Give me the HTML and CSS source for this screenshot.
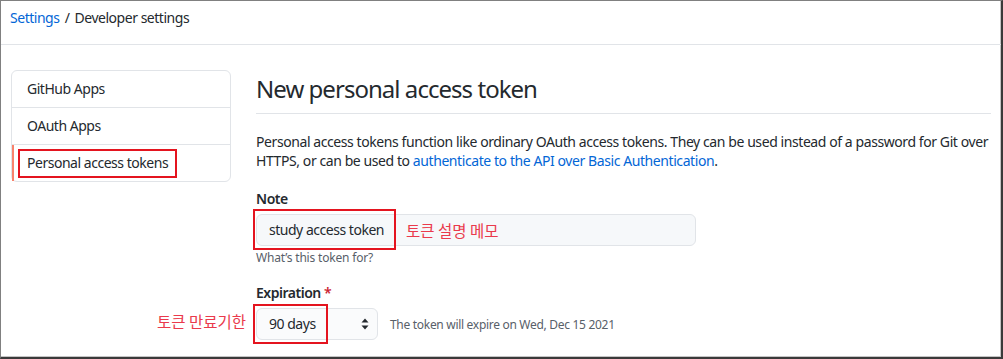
FILE: index.html
```html
<!DOCTYPE html>
<html lang="en">
<head>
  <meta charset="UTF-8">
  <title>New personal access token</title>
  <link rel="stylesheet" href="styles.css">
</head>
<body>
  <div class="frame">
    <div class="crumbs">
      <a href="#">Settings</a> <span class="sep">/</span> Developer settings
    </div>
    <div class="layout">
      <nav class="menu">
        <a class="menu-item" href="#">GitHub Apps</a>
        <a class="menu-item" href="#">OAuth Apps</a>
        <a class="menu-item selected" href="#"><span class="marked">Personal access tokens</span></a>
      </nav>
      <div class="main">
        <h2>New personal access token</h2>
        <p class="intro">Personal access tokens function like ordinary OAuth access tokens. They can be used instead of a password for Git over HTTPS, or can be used to <a href="#">authenticate to the API over Basic Authentication</a>.</p>

        <label class="field-label">Note</label>
        <div class="input">
          <span class="marked wide">study access token</span>
          <span class="note-ko">토큰 설명 메모</span>
        </div>
        <div class="hint">What’s this token for?</div>

        <label class="field-label expire-label">Expiration <span class="req">*</span></label>
        <div class="expire-row">
          <span class="note-ko side">토큰 만료기한</span>
          <div class="select">
            <span class="marked tall">90 days</span>
            <svg class="arrows" width="8" height="12" viewBox="0 0 8 12"><path d="M4 0.5L7.5 4.5H0.5Z M4 11.5L7.5 7.5H0.5Z" fill="#24292e"/></svg>
          </div>
          <span class="expire-note">The token will expire on Wed, Dec 15 2021</span>
        </div>
      </div>
    </div>
  </div>
</body>
</html>
```

FILE: styles.css
```css
body { margin: 0; font-family: "Noto Sans", "Noto Sans CJK KR", sans-serif; font-size: 14px; letter-spacing: -0.034em; color: #24292e; background: #fff; }
a { color: #0366d6; text-decoration: none; }
.frame { width: 1003px; height: 359px; box-sizing: border-box; border-top: 1px solid #808080; border-left: 1px solid #808080; border-right: 2px solid #3a3a3a; border-bottom: 2px solid #3a3a3a; box-shadow: inset -1px -1px 0 #c4c4c4; overflow: hidden; }
.crumbs { padding: 7px 9px 16px; line-height: 20px; border-bottom: 1px solid #e1e4e8; }
.crumbs .sep { color: #24292e; margin: 0 2px; }
.layout { display: flex; gap: 25px; padding: 25px 10px 0; }
.menu { box-sizing: border-box; width: 220px; flex: none; align-self: flex-start; border: 1px solid #e1e4e8; border-radius: 6px; display: flex; flex-direction: column; }
.menu-item { display: block; padding: 8px 15px; line-height: 20px; color: #24292e; border-top: 1px solid #e1e4e8; }
.menu-item:first-child { border-top: none; }
.menu-item.selected { box-shadow: inset 2px 0 #f9826c; }
.marked { position: relative; }
.marked::after { content: ""; position: absolute; top: -4px; bottom: -6px; left: -9px; right: -9px; border: 2px solid #e4141f; }
.main { width: 736px; }
h2 { margin: 0; padding: 4px 0 9px; font-size: 24px; font-weight: 400; letter-spacing: -0.04em; line-height: 30px; border-bottom: 1px solid #e1e4e8; }
.intro { margin: 18px 0 0; line-height: 19px; letter-spacing: -0.03em; }
.field-label { display: block; margin-top: 19px; font-weight: 600; line-height: 20px; }
.field-label.expire-label { margin-top: 16px; }
.input { box-sizing: border-box; width: 440px; height: 32px; margin-top: 5px; padding: 0 12px; display: flex; align-items: center; gap: 22px; background: #f6f8fa; border: 1px solid #e1e4e8; border-radius: 6px; }
.input .marked { line-height: 20px; }
.marked.wide::after { top: -11px; bottom: -10px; left: -16px; right: -12px; }
.note-ko { font-family: "Noto Sans CJK KR", sans-serif; font-size: 15.5px; letter-spacing: 0; line-height: 20px; color: #ea3a4c; }
.hint { margin-top: 3px; font-size: 12px; line-height: 18px; letter-spacing: -0.015em; color: #586069; }
.req { color: #cb2431; }
.expire-row { position: relative; display: flex; align-items: center; gap: 12px; margin-top: 5px; }
.note-ko.side { position: absolute; right: 100%; margin-right: 10px; top: 3px; white-space: nowrap; }
.select { box-sizing: border-box; width: 122px; height: 32px; padding: 0 8px 0 12px; display: flex; align-items: center; justify-content: space-between; background: #fafbfc; border: 1px solid #e1e4e8; border-radius: 6px; }
.select .marked { line-height: 20px; }
.marked.tall::after { top: -10px; bottom: -10px; left: -16px; right: -12px; }
.expire-note { font-size: 12px; letter-spacing: -0.025em; color: #586069; }
```
